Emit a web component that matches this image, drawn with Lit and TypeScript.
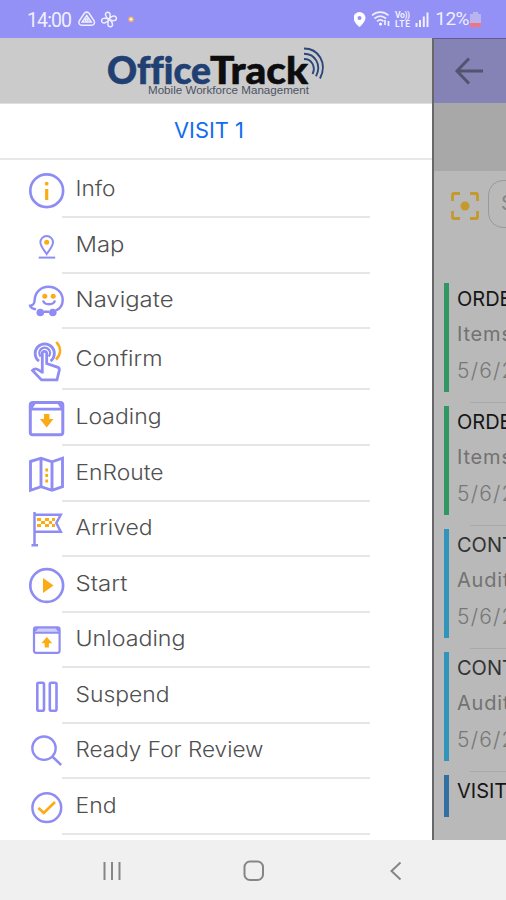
import { LitElement, html, svg, css } from "lit";
import { customElement } from "lit/decorators.js";

const ICONS: Record<string, unknown> = {
  info: svg`<circle cx="22.700" cy="28.700" r="16.400" stroke-width="2.700"/><circle class="fill" cx="22.700" cy="21.700" r="1.900"/><path class="gold" stroke-width="3.200" d="M22.700 27v11"/>`,
  map: svg`<path stroke-width="2" d="M22.700 36c-2.600-4.200-6.300-7.400-6.300-11.700a6.300 6.300 0 0 1 12.600 0c0 4.300-3.700 7.500-6.300 11.700z"/><circle class="fill" cx="22.700" cy="24.200" r="2.500"/><path stroke-width="2" d="M14.700 39.600h16.500"/>`,
  navigate: svg`<path stroke-width="2.500" d="M12 36.300C9 35.800 6.700 34.400 6.200 32.800c3.700-.5 4.300-2.500 4.500-6.300C11.200 19 17 13.800 24.500 13.800c8.200 0 14.200 6 14.200 13.200 0 5.300-3 8.800-6.800 10.400M20 38.700h5"/><circle class="solid" cx="16.300" cy="39.500" r="3.800"/><circle class="solid" cx="28.800" cy="39.500" r="3.800"/><circle class="fill" cx="20.800" cy="23.200" r="2.500"/><circle class="fill" cx="29.200" cy="23.200" r="2.500"/><path stroke-width="2.400" d="M19 27.500c1.500 5 10.500 5 12 0"/>`,
  confirm: svg`<path stroke-width="2.800" d="M15 27.200a9.600 9.600 0 1 1 11.500 0"/><path stroke-width="2.400" d="M16.700 22.500a5.300 5.300 0 1 1 8 0"/><path stroke-width="2.800" d="M18.300 39.500V19.500a2.200 2.200 0 0 1 4.400 0V29.500l11.300 3.800c1.300.5 1.500 1.500 1.300 3L33 45.900H17.500L8.500 36.500c2-2.300 4.300-1.800 6.300-.4l3.500 2.300"/><path class="gold" stroke-width="2.600" d="M32.300 8c5 5.500 5 12-.3 17.500"/>`,
  loading: svg`<rect x="6.300" y="12.600" width="32.500" height="32.200" rx="2.500" stroke-width="3"/><path stroke-width="2.700" d="M6.800 19.200h31.500M7.500 17.500l3-4.500M37.700 17.500l-3-4.500"/><path class="fill" d="M20 24h5.400v5h4.100l-6.800 8.500-6.800-8.500H20z"/>`,
  enroute: svg`<path stroke-width="2.900" d="M6.500 15.500l10.500-3.300 11 3.600 10.500-3.600v28.500l-10.500 3.600-11-3.600-10.500 3.600zM17 12.200v28.500M28 15.800v28.500"/><path class="gold" stroke-width="2.800" d="M22.700 22.500v3M22.700 28v3M22.700 33.500v3"/>`,
  arrived: svg`<path stroke-width="2.500" d="M10.500 11v33M7.500 44.200h6.500M10.500 13.800h26.300l-4.500 8.200 4.500 8.700h-26.300"/><path class="fill" d="M13 17h4v3h-4zM21 17h4v3h-4zM28 17h3v3h-3zM17 20h4v3h-4zM25 20h3v3h-3zM13 23h4v3h-4zM21 23h4v3h-4zM28 23h3v3h-3z"/>`,
  start: svg`<circle cx="22.700" cy="28.500" r="16.400" stroke-width="2.700"/><path class="fill" d="M19 21v15l10.500-7.500z"/>`,
  unloading: svg`<rect class="tint" x="11" y="15.500" width="24" height="5"/><rect x="10" y="15.400" width="25.600" height="25.400" rx="2" stroke-width="2.200"/><path stroke-width="2" d="M10.500 20.700h24.800M11 19l2.500-3.500M34.700 19l-2.500-3.500"/><path class="fill" d="M20.700 35.500h4.200v-4.300h3.300l-5.400-6.200-5.400 6.200h3.300z"/>`,
  suspend: svg`<rect x="13.300" y="14.700" width="6.700" height="28" rx="1.500" stroke-width="2.600"/><rect x="25.800" y="14.700" width="6.700" height="28" rx="1.500" stroke-width="2.600"/>`,
  review: svg`<circle cx="20" cy="25.200" r="11.700" stroke-width="2.300"/><path stroke-width="2.500" d="M28.300 33.500l8.900 8.500"/>`,
  end: svg`<circle cx="22.800" cy="28.700" r="14.400" stroke-width="2.500"/><path class="gold" stroke-width="2.700" d="M14.500 29l5.300 5L31 23"/>`,
};

// icon, label, label width, row height, lift of the label above the rule
const ROWS: [string, string, number, number, number][] = [
  ["info", "Info", 40, 58, 29.3],
  ["map", "Map", 49, 55, 29.3],
  ["navigate", "Navigate", 98, 56, 30],
  ["confirm", "Confirm", 87, 61, 31.7],
  ["loading", "Loading", 86, 56, 29.3],
  ["enroute", "EnRoute", 88, 55, 29.7],
  ["arrived", "Arrived", 77, 56, 29.5],
  ["start", "Start", 52, 55, 29.3],
  ["unloading", "Unloading", 110, 56, 30],
  ["suspend", "Suspend", 94, 55, 29.7],
  ["review", "Ready For Review", 188, 56, 29.7],
  ["end", "End", 41, 55, 30],
];

const CARDS: [string, string, string, string][] = [
  ["green", "ORDER", "Items", "5/6/2021"],
  ["green", "ORDER", "Items", "5/6/2021"],
  ["cyan light", "CONTROL", "Audit", "5/6/2021"],
  ["cyan light", "CONTROL", "Audit", "5/6/2021"],
  ["blue", "VISIT 1", "", ""],
];

@customElement("status-bar")
class StatusBar extends LitElement {
  static styles = css`
    :host { display: flex; justify-content: space-between; height: 38px; background: #9391f5; padding: 0 24px 0 27px; box-sizing: border-box; color: #f0efff; font: 19px/40px Roboto, sans-serif; }
    .group { display: flex; align-items: center; height: 38px; }
    svg { display: block; }
    .time { width: 45px; white-space: nowrap; }
    .pct { white-space: nowrap; letter-spacing: -0.500px; font-size: 19px; margin-left: -2px; }
  `;
  render() {
    return html`
      <div class="group">
        <span class="time"><svg width="45" height="38"><text x="0" y="26.500" font-size="19.500" fill="#f0efff" textLength="45">14:00</text></svg></span>
        <svg width="65" height="38" fill="none" stroke="#f0efff" stroke-width="1.500">
          <path d="M12.300 13.300c1.400-1.400 3.400-1.400 4.800 0l5 7.500c1 2.200.2 4.200-2.200 4.400h-10.400c-2.400-.2-3.200-2.200-2.200-4.400z"/>
          <path d="M14.700 15.500l4.500 6.500h-9z"/><circle cx="14.700" cy="20" r="1.300"/>
          <path d="M37 19.500c-4-2-4.700-7-1.500-7.300 3-.2 3.500 3.500 1.500 7.300c2-4 7-4.700 7.400-1.500.2 3-3.500 3.500-7.400 1.500c4 2 4.700 7 1.500 7.300-3 .2-3.500-3.500-1.500-7.300c-2 4-7 4.700-7.400 1.500-.2-3 3.500-3.500 7.400-1.500z"/>
          <circle cx="59" cy="19.300" r="2.800" fill="#f4b36a" stroke="none"/><circle cx="59" cy="19.300" r="1.200" fill="#fff" stroke="none"/>
        </svg>
      </div>
      <div class="group">
        <svg width="83" height="38" fill="none" stroke="#f0efff">
          <path fill="#fff" stroke="none" fill-rule="evenodd" d="M5.500 12a6 6 0 0 1 6 6c0 4-6 9-6 9s-6-5-6-9a6 6 0 0 1 6-6zm0 4a2 2 0 1 0 0 4 2 2 0 0 0 0-4z"/>
          <g stroke-width="1.700"><path d="M18 15.300c5-4.200 11.500-4.200 16.500 0M20.500 18.500c3.500-3 8-3 11.500 0M23 21.300c2-1.700 4.500-1.700 6.500 0"/><path d="M31 20v5M34.500 21v5"/></g><circle cx="26.500" cy="24" r="1.500" fill="#fff" stroke="none"/>
          <g fill="#f0efff" stroke="none" font-size="8.500" font-weight="700"><text x="41" y="18" textLength="15">Vo))</text><text x="41" y="26.500" textLength="15">LTE</text></g>
          <path stroke-width="2" d="M62.500 23v4M66 20v7M69.800 16.500v10.500M73.500 12.500v14.500"/>
        </svg>
        <span class="pct">12%</span>
        <svg width="13" height="38"><path fill="#b9b3ee" d="M4 12h5v2h3v9H1v-9h3z"/><path fill="#ee7683" d="M1 23h11v4H1z"/></svg>
      </div>`;
  }
}

@customElement("side-drawer")
class SideDrawer extends LitElement {
  static styles = css`
    :host { display: block; width: 432px; height: 802px; background: #fff; overflow: hidden; font-family: Inter, sans-serif; }
    .logo { height: 66px; background: #cbcbcb; border-bottom: 1px solid #dedede; box-sizing: border-box; }
    .logo svg { display: block; }
    .word { font-variant-ligatures: none; stroke-width: 0.600px; }
    .title { height: 56px; box-sizing: border-box; border-bottom: 2px solid #e8e8e8; display: flex; justify-content: center; padding: 12px 14px 0 0; }
    .row { display: grid; grid-template-columns: 38px 308px; padding-left: 24px; align-items: end; }
    .icon { width: 44px; height: 56px; overflow: visible; fill: none; stroke: #8f8df3; position: relative; z-index: 1; }
    .fill { fill: #fbab13; stroke: none; }
    .solid { fill: #8f8df3; stroke: none; }
    .tint { fill: #cfceff; stroke: none; }
    .gold { stroke: #fbab13; }
    .cell { height: 55px; box-sizing: border-box; border-bottom: 2px solid #e6e6e6; }
    .cell svg { display: block; overflow: visible; }
    .label { font-size: 21px; font-weight: 300; fill: #505050; }
  `;
  render() {
    return html`
      <div class="logo">
        <svg width="432" height="66">
          <g class="word" font-family="Lato, sans-serif" font-weight="900" font-size="37.500">
            <text x="107" y="46" fill="#203f72" stroke="#203f72" textLength="104" lengthAdjust="spacingAndGlyphs">Office</text>
            <text x="210" y="46" fill="#0d0d0f" stroke="#0d0d0f" textLength="98" lengthAdjust="spacingAndGlyphs">Track</text>
          </g>
          <text x="148" y="56" font-family="Liberation Sans, sans-serif" font-size="10.500" fill="#4b5364" textLength="161" lengthAdjust="spacingAndGlyphs">Mobile Workforce Management</text>
          <g fill="none" stroke="#2b477a" stroke-width="1.900"><path d="M304 10.500c14 0 24 14 16 30"/><path d="M304 15.700c11 0 18 11 12 22.500"/><path d="M304 21c8 0 12 8 8.500 15"/></g>
        </svg>
      </div>
      <div class="title"><svg width="72" height="32"><text x="1" y="22" font-size="22" font-weight="400" fill="#126cf2" textLength="70" lengthAdjust="spacingAndGlyphs">VISIT 1</text></svg></div>
      ${ROWS.map(([icon, label, width, height, lift]) => html`
        <div class="row" style="height:${height}px">
          <svg class="icon">${ICONS[icon]}</svg>
          <div class="cell"><svg width="300" height="53"><text class="label" x="13.500" y=${62.7 - lift} textLength=${width} lengthAdjust="spacingAndGlyphs">${label}</text></svg></div>
        </div>`)}
    `;
  }
}

@customElement("visit-list")
class VisitList extends LitElement {
  static styles = css`
    :host { display: block; width: 74px; height: 802px; background: #b9b9b9; overflow: hidden; box-sizing: border-box; border-left: 2px solid #68686b; font-family: Inter, sans-serif; }
    .bar { height: 65px; background: #8583b6; border-top: 1px solid #5f5d98; box-sizing: border-box; }
    .band { height: 68px; background: #a8a8a8; }
    .search { display: flex; height: 112px; padding: 9px 0 0 16px; box-sizing: border-box; gap: 8px; }
    .scan { margin-top: 11px; flex: none; }
    .input { height: 48px; width: 80px; flex: none; border: 1px solid #999; border-radius: 15px; box-sizing: border-box; padding-left: 12px; font-size: 20px; line-height: 44px; color: #858585; }
    .card { display: flex; height: 123px; gap: 8px; padding-left: 10px; position: relative; white-space: nowrap; }
    .mark { width: 5px; height: 109px; flex: none; }
    .green .mark { background: #309762; }
    .cyan .mark { background: #3194ba; }
    .blue .mark { background: #3270a4; height: 42px; }
    .rule { position: absolute; left: 36px; right: 0; top: 119px; height: 1px; background: #a9a9a9; }
    .name { font-size: 20px; line-height: 33px; color: #161616; }
    .light .name { color: #333; }
    .meta { font-size: 20px; line-height: 37px; color: #727272; letter-spacing: 0.800px; }
    .date { line-height: 36px; color: #777; font-weight: 300; font-size: 21px; letter-spacing: 1.200px; }
  `;
  render() {
    return html`
      <div class="bar"><svg width="72" height="64" fill="none" stroke="#53536f" stroke-width="3"><path d="M49 32H23.500M35 19.500L23 32l12 12.500"/></svg></div>
      <div class="band"></div>
      <div class="search">
        <svg class="scan" width="30" height="30" fill="none" stroke="#c59a2c" stroke-width="2.800"><path d="M2.500 10V4q0-1.500 1.500-1.500H10M20 2.500h6q1.500 0 1.500 1.500V10M27.500 20v6q0 1.500-1.500 1.500H20M10 27.500H4q-1.500 0-1.500-1.500V20"/><circle cx="15" cy="15" r="4.500" fill="#c59a2c" stroke="none"/></svg>
        <div class="input">Search</div>
      </div>
      ${CARDS.map(([kind, name, item, date]) => html`
        <div class="card ${kind}">
          <div class="mark"></div>
          <div><div class="name">${name}</div><div class="meta">${item}</div><div class="meta date">${date}</div></div>
          <div class="rule"></div>
        </div>`)}
    `;
  }
}

@customElement("app-root")
class AppRoot extends LitElement {
  static styles = css`
    :host { display: block; width: 506px; height: 900px; overflow: hidden; background: #fff; }
    .main { display: flex; height: 802px; }
    .nav { height: 60px; background: #f0f0f0; }
    .nav svg { display: block; }
  `;
  render() {
    return html`
      <status-bar></status-bar>
      <div class="main"><side-drawer></side-drawer><visit-list></visit-list></div>
      <div class="nav"><svg width="506" height="60" fill="none" stroke="#858585" stroke-width="2"><path d="M104.500 22v18M112 22v18M119.500 22v18M400.500 22.500L391.500 31l9 8.500"/><rect x="244.500" y="21.500" width="18.500" height="18.500" rx="5.500"/></svg></div>
    `;
  }
}
